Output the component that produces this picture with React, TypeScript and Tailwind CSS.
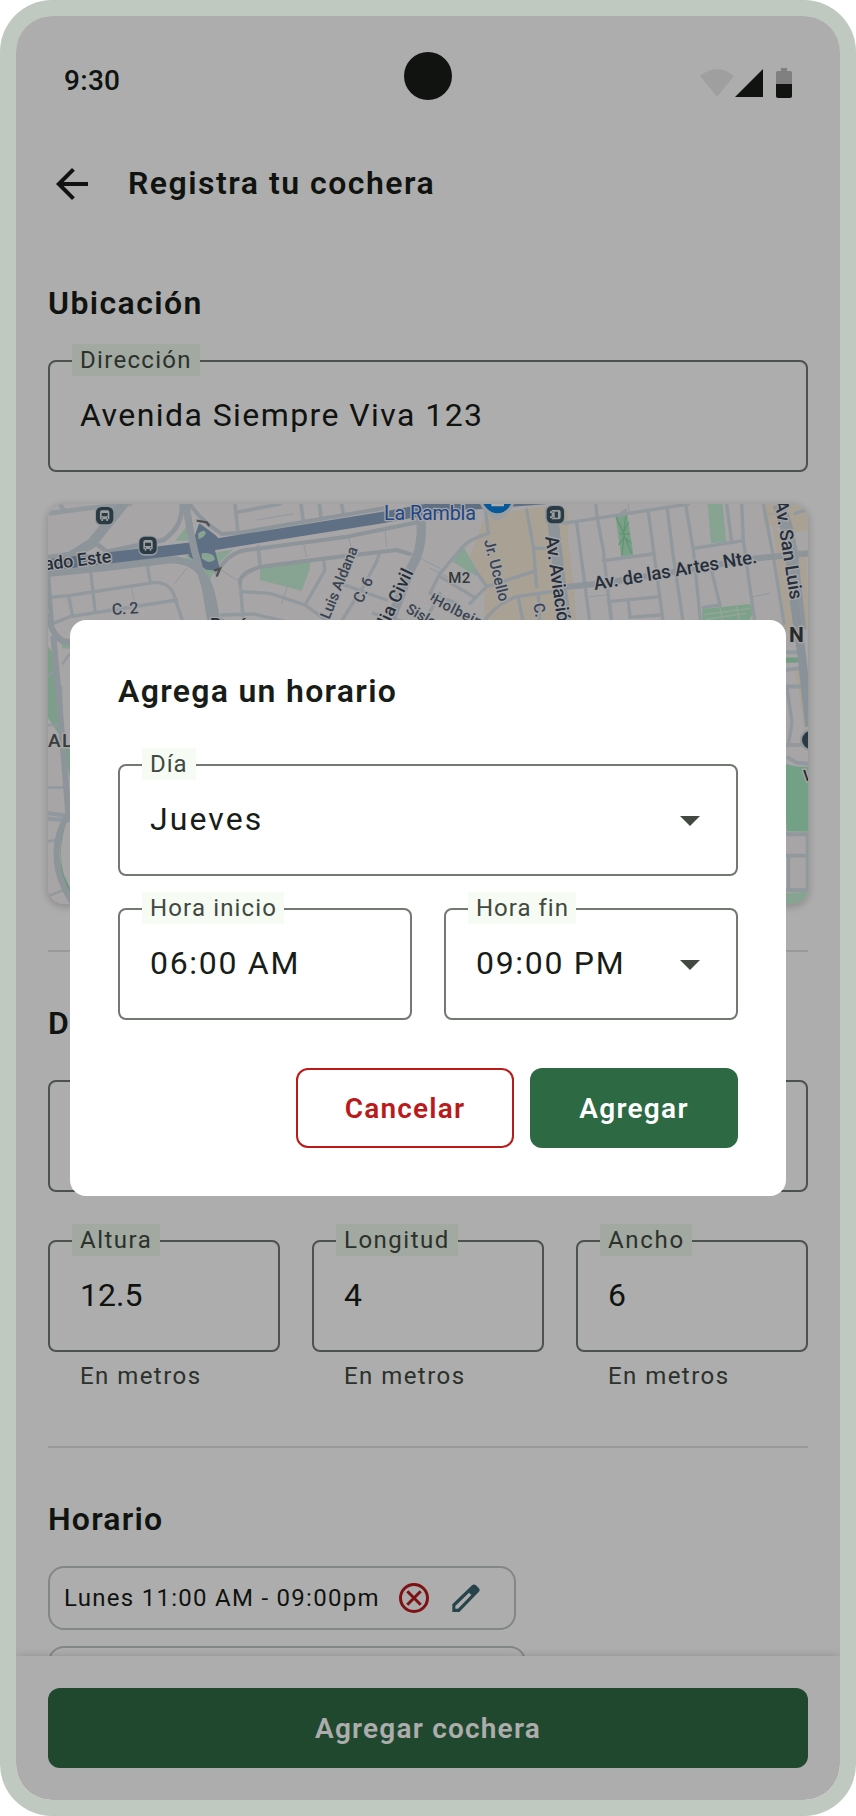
import React from "react";

type FieldProps = {
  label?: string;
  value?: string;
  labelClass?: string;
  valueClass?: string;
  className?: string;
  tint?: string;
  caret?: boolean;
};

function Field({ label, value, labelClass = "", valueClass = "", className = "", tint = "bg-[#eefaed]", caret = false }: FieldProps) {
  return (
    <div className={`relative flex h-28 items-center justify-between rounded-lg border-2 border-[#717971] pr-[30px] pb-0.5 pl-[30px] ${className}`}>
      {label && (
        <span className={`absolute -top-[18px] left-[22px] h-8 px-2 text-[24px] leading-8 whitespace-nowrap text-[#414941] ${tint} ${labelClass}`}>
          {label}
        </span>
      )}
      <span className={`text-[32px] leading-10 whitespace-nowrap text-[#181d18] ${valueClass}`}>{value}</span>
      {caret && (
        <svg className="mt-1 mr-1.5 h-2.5 w-5" viewBox="0 0 20 10">
          <path d="M0 0H20L10 10Z" fill="#414941" />
        </svg>
      )}
    </div>
  );
}

function BusIcon({ x, y, turn = 0 }: { x: number; y: number; turn?: number }) {
  return (
    <g transform={`translate(${x} ${y}) rotate(${turn})`}>
      <rect x="-29" y="-29" width="58" height="60" rx="18" fill="#d5dde4" />
      <rect x="-26" y="-26" width="52" height="52" rx="16" fill="#405764" />
      <path d="M-14 -10q0-6 6-6H8q6 0 6 6V11H10v5H5V11H-5v5H-10V11H-14Z" fill="#e6ebee" />
      <path d="M-9 -8H9V2H-9Z" fill="#405764" />
      <circle cx="-8" cy="7" r="2" fill="#405764" />
      <circle cx="8" cy="7" r="2" fill="#405764" />
    </g>
  );
}

function StreetMap() {
  const west = "translate(-8 -14) scale(.33333)";
  const east = "translate(382 -14) scale(.33333)";
  const edgeW = "translate(-8 96) scale(.33333 .35714)";
  const edgeE = "translate(672 96) scale(.33333 .3827)";
  return (
    <svg className="block h-full w-full" viewBox="0 0 760 400">
      <rect width="760" height="400" fill="#f7f3f4" />

      {/* parks and commercial areas */}
      <g transform={west} stroke="none">
        <path d="M660 228L812 216L808 240L785 302L660 270Z" fill="#c8f0d6" />
        <path d="M405 152L440 110L445 152ZM435 197L520 190L580 178L540 215L510 268Z" fill="#c8f0d6" />
      </g>
      <g transform={east}>
        <path d="M165 75L340 50L415 60V160L432 300L440 420H160L165 290L120 200Z" fill="#faeed9" />
        <path d="M1000 42H1135V120L1090 130L1000 100Z" fill="#faeed9" />
        <path d="M1030 110L1130 200L1134 420H1060Z" fill="#faeed9" />
        <path d="M68 215L100 170L138 235V258Z" fill="#c8f0d6" />
        <path d="M833 42H878L888 155L843 160Z" fill="#c8f0d6" />
        <path d="M556 75L592 72L610 194L574 200Z" fill="#b3eec8" />
        <path d="M816 358L960 342L968 372L940 420H820Z" fill="#b8efcb" />
        <path d="M558 80L580 130L588 76M582 135L605 190M582 135L576 195M570 132H600M568 100L580 130L596 96M566 165L582 140L604 160" stroke="#94d8ac" strokeWidth="4" fill="none" />
        <path d="M822 374L960 355M826 388L950 370M870 355L880 400M920 350L928 395" stroke="#dcf4e4" strokeWidth="4" />
      </g>
      <g transform={edgeW}>
        <path d="M24 130L40 150L46 190L62 345L90 420V500L60 380L24 330Z" fill="#b8ebca" />
        <path d="M66 120H90V136H66Z" fill="#c8f0d6" />
        <path d="M80 620Q50 700 72 770L92 810L92 845Q62 790 62 745Q58 660 72 620Z" fill="#a4e0b9" />
      </g>
      <g transform={edgeE}>
        <path d="M190 425Q225 438 264 436V605L200 604Z" fill="#aaeec4" />
        <path d="M190 765Q230 768 264 760V800H190Z" fill="#c8f0d6" />
        <path d="M190 150H232L238 158L230 164H190Z" fill="#a8e6bd" />
        <path d="M225 180L238 176L262 330L256 350Z" fill="#faeed9" />
      </g>

      {/* minor streets */}
      <g transform={west} fill="none" stroke="#d6e1e9" strokeWidth="10" strokeLinecap="round">
        <path d="M24 70L140 55L270 42M60 40L70 62" strokeWidth="14" />
        <path d="M320 215L330 272M152 243L165 360M86 320L98 380M30 322L90 316L345 277Q385 277 400 310L430 400M40 400L90 380L410 330" />
        <path d="M585 42L594 128M594 66L720 42M783 42L790 95M838 42L843 80M905 42L910 72M655 170L660 228" strokeWidth="11" />
        <path d="M850 208L855 240L795 345M605 305L690 310L795 345L860 392M600 278L610 390M545 375L640 372L740 395" />
        <path d="M1020 185L1010 215L970 290L900 400M900 280L1040 330M1000 370L1110 400M1140 420L1200 310" />
        <path d="M925 140L935 175M1110 190L1200 235M745 280L725 340M660 230L600 270M1035 120L1040 170M790 160L800 200M530 230L590 270L640 235M405 280L440 235M275 290L285 350M650 90L760 72" strokeWidth="3" />
      </g>
      <g transform={east} fill="none" stroke="#d6e1e9" strokeWidth="10" strokeLinecap="round">
        <path d="M165 50L175 130Q110 150 90 180L30 250L0 310M135 240L170 290L120 340M30 260L130 320M0 310L80 340M170 290L310 245" />
        <path d="M290 60L310 170L320 290M310 175H345M160 400Q190 345 260 320L400 300M265 322L280 400M325 310L330 420" />
        <path d="M400 100L500 85L775 42M497 42L502 85L520 180L545 410M440 98L480 400M575 70L588 60M655 65L700 400M712 58L730 200L760 400M768 50L790 180L812 400" />
        <path d="M520 212L668 192M790 175L940 152L935 42M890 42L905 155M940 152L975 400M843 235L870 345L820 352M535 335L690 320M540 345L545 400M595 335L600 382L690 375" />
        <path d="M1000 42L1030 200L1062 400M1095 70L1135 58" />
        <path d="M0 235L60 265M480 320L530 315M970 320L1020 310M595 42L600 70M1010 72H1030" strokeWidth="3" />
      </g>
      <g transform={edgeW} fill="none" stroke="#d6e1e9" strokeWidth="12">
        <path d="M24 213L46 195M24 525H72M24 676L60 670M24 830L70 812M66 180L90 150M24 350H60M64 240V320" strokeWidth="7" />
        <path d="M24 597L90 605M24 612L90 618" />
      </g>
      <g transform={edgeE} fill="none" stroke="#d6e1e9" strokeWidth="10">
        <path d="M190 184L240 178M190 226H242M200 220L216 320L205 380M190 380L264 378M200 410L230 425L264 428M190 612H264M190 668H264M206 670V762M190 758H264M262 615V760M190 137H235" />
      </g>

      {/* avenues */}
      <g transform={west} fill="none" stroke="#d0dbe3" strokeLinecap="round">
        <path d="M250 42L155 160L90 200L24 210" strokeWidth="30" />
        <path d="M155 150L200 185L370 150Q430 110 425 42" strokeWidth="14" />
        <path d="M24 250L200 232L380 210Q460 205 490 260L515 400" strokeWidth="22" />
        <path d="M450 42Q480 90 545 132L600 128L1030 55" strokeWidth="12" />
        <path d="M530 250Q565 180 640 178L920 140L1140 95" strokeWidth="12" />
        <path d="M505 410L540 400" strokeWidth="34" />
        <path d="M600 280Q600 240 680 228L860 205L1070 180L1110 192" strokeWidth="12" />
        <path d="M1140 60Q1155 170 1115 230L1040 420" strokeWidth="28" />
        <path d="M24 260L35 400" strokeWidth="14" />
      </g>
      <g transform={west} fill="none" stroke="#8da6c5">
        <path d="M24 225L220 202L470 172L1030 82L1260 40" strokeWidth="34" />
        <path d="M480 106L525 140L545 165L500 180L465 150ZM450 195L500 235L535 238L520 180Z" strokeWidth="9" fill="#8da6c5" strokeLinejoin="round" />
      </g>
      <g transform={west}>
        <path d="M475 130Q495 115 498 130Q490 145 475 147Z" fill="#c8f0d6" />
        <path d="M485 190Q520 185 525 208Q510 225 485 205Z" fill="#c8f0d6" />
        <path d="M438 42Q455 180 500 300L515 410" stroke="#d0dbe3" strokeWidth="22" fill="none" />
        <path d="M494 260Q520 300 532 410" stroke="#d0dbe3" strokeWidth="20" fill="none" />
        <path d="M470 92L500 97L508 108M522 242L540 236L530 260" stroke="#777" strokeWidth="7" fill="none" />
      </g>
      <g transform={east} fill="none" stroke="#d0dbe3">
        <path d="M370 100L388 260L412 420" strokeWidth="34" />
        <path d="M400 292L520 280L980 205L1135 190" strokeWidth="18" />
        <path d="M1045 42Q1080 120 1090 240L1110 420" strokeWidth="38" />
      </g>
      <path d="M388 0L500 0L380 9Z" fill="#8da6c5" />
      <g transform={edgeW} fill="none" stroke="#d0dbe3">
        <path d="M24 40Q40 120 90 118M40 100L58 290L80 540L85 600Q35 670 55 760Q70 810 100 850" strokeWidth="18" />
      </g>
      <g transform={edgeE} fill="none" stroke="#cbd8e2">
        <path d="M222 0L246 150L268 330" strokeWidth="26" />
      </g>

      {/* place markers */}
      <g transform={west}>
        <BusIcon x={194} y={77} />
        <BusIcon x={324} y={166} />
      </g>
      <g transform={east}>
        <BusIcon x={376} y={74} turn={90} />
        <path d="M150 42Q160 65 190 88Q202 98 214 88Q245 65 252 42Z" fill="#e4e9ee" />
        <path d="M160 42Q178 70 202 70Q228 70 243 42Z" fill="#0a84e0" />
        <path d="M184 42H222V49H184Z" fill="#fff" />
      </g>
      <circle cx="763" cy="236" r="10" fill="#405764" stroke="#d5dde4" strokeWidth="2" />

      {/* street names */}
      <g fill="#384658" stroke="#f3f3f5" strokeWidth="8" strokeLinejoin="round" paintOrder="stroke" fontFamily="Roboto, sans-serif" fontWeight="500">
        <g transform={west}>
          <text transform="translate(14 241) rotate(-7)" fontSize="54" textLength="203">ado Este</text>
          <text transform="translate(217 375) rotate(-4)" fontSize="48" textLength="80" fill="#56647a">C. 2</text>
          <text transform="translate(868 390) rotate(-68)" fontSize="45" textLength="230" fill="#56647a">Luis Aldana</text>
          <text transform="translate(966 342) rotate(-64)" fontSize="46" textLength="80" fill="#56647a">C. 6</text>
          <text transform="translate(1038 424) rotate(-65)" fontSize="54" textLength="196">dia Civil</text>
          <text transform="translate(1095 365) rotate(30)" fontSize="44" fill="#56647a">Sisley</text>
          <text transform="translate(1196 345) rotate(-60)" fontSize="42" fill="#56647a">T</text>
          <text x="510" y="420" fontSize="52" letterSpacing="2">Perú</text>
          <text x="1032" y="89" fontSize="59" fontWeight="400" textLength="276" fill="#2e66c8">La Rambla</text>
        </g>
        <g transform={east}>
          <text x="55" y="279" fontSize="45" textLength="66" fill="#4d5357">M2</text>
          <text transform="translate(162 152) rotate(76)" fontSize="46" textLength="190" fill="#56647a">Jr. Ucello</text>
          <text transform="translate(5 340) rotate(27)" fontSize="44" textLength="160" fill="#56647a">Holbein</text>
          <text transform="translate(346 140) rotate(82)" fontSize="56" textLength="290">Av. Aviación</text>
          <text transform="translate(310 342) rotate(80)" fontSize="46" fill="#56647a">C. 5</text>
          <text transform="translate(494 300) rotate(-9.5)" fontSize="56" textLength="496">Av. de las Artes Nte.</text>
          <text transform="translate(1034 34) rotate(81)" fontSize="56" textLength="300">Av. San Luis</text>
        </g>
        <text x="741" y="138" fontSize="21" fontWeight="700" strokeWidth="3" fill="#3c3f42">N</text>
        <text x="0" y="243" fontSize="19" letterSpacing="1.5" strokeWidth="3" fill="#55585b">AL</text>
        <text x="755" y="277" fontSize="15" strokeWidth="3" fill="#3c3f42">V</text>
      </g>
    </svg>
  );
}

function StatusBar() {
  return (
    <div className="flex h-[128px] items-center justify-between px-12">
      <span className="w-[150px] pt-0.5 text-[28px] leading-8 font-medium tracking-[0.3px] text-[#181d18]">9:30</span>
      <div className="-mt-2 size-12 rounded-full bg-[#181d18]" />
      <svg className="mt-1 h-8 w-[150px]" viewBox="642 66 150 32">
        <path d="M700 76Q717 62 734 76L717 97Z" fill="#000" opacity=".08" />
        <path d="M735 97L763 69V97Z" fill="#181d18" />
        <path d="M781 68H787V71H790Q792 71 792 73V84H776V73Q776 71 778 71H781Z" fill="#181d18" opacity=".29" />
        <path d="M776 84H792V96Q792 98 790 98H778Q776 98 776 96Z" fill="#181d18" />
      </svg>
    </div>
  );
}

function Dialog() {
  return (
    <div className="flex h-[576px] w-[716px] flex-col rounded-2xl bg-white px-12 pt-[51px]">
      <h2 className="text-[32px] leading-10 font-semibold tracking-[1.3px] text-[#181d18]">Agrega un horario</h2>
      <Field className="mt-[53px]" label="Día" value="Jueves" caret tint="bg-[#f6fbf3]" labelClass="w-[54px] tracking-[0.9px]" valueClass="tracking-[2.1px]" />
      <div className="mt-8 grid grid-cols-2 gap-8">
        <Field label="Hora inicio" value="06:00 AM" tint="bg-[#f6fbf3]" labelClass="w-[142px] tracking-[1.15px]" valueClass="tracking-[1.7px]" />
        <Field label="Hora fin" value="09:00 PM" caret tint="bg-[#f6fbf3]" labelClass="w-[108px] tracking-[1px]" valueClass="tracking-[1.7px]" />
      </div>
      <div className="mt-12 flex justify-end gap-4">
        <button className="h-20 w-[218px] rounded-xl border-2 border-[#ba1a1a] pt-0.5 text-[28px] font-semibold tracking-[1.2px] text-[#ba1a1a]">Cancelar</button>
        <button className="h-20 w-[208px] rounded-xl bg-[#2d6a43] pt-0.5 text-[28px] font-semibold tracking-[1.3px] text-white">Agregar</button>
      </div>
    </div>
  );
}

export default function App() {
  return (
    <div className="relative h-[1816px] w-[856px] overflow-hidden bg-white font-['Roboto',sans-serif]">
      <div className="h-full rounded-[52px] bg-[#bfc9bf] p-4">
        <div className="relative flex h-full flex-col overflow-hidden rounded-[36px] bg-white">
          <StatusBar />
          <header className="flex h-20 items-center gap-8 px-8">
            <svg className="size-12" viewBox="0 0 24 24" fill="#181d18">
              <path d="M7.825 13L13.425 18.6L12 20L4 12L12 4L13.425 5.4L7.825 11H20V13Z" />
            </svg>
            <h1 className="-mt-0.5 text-[32px] leading-10 font-semibold tracking-[1.5px] text-[#181d18]">Registra tu cochera</h1>
          </header>

          <main className="flex min-h-0 flex-1 flex-col overflow-hidden px-8 pt-[59px]">
            <h2 className="text-[32px] leading-10 font-semibold tracking-[1.4px] text-[#181d18]">Ubicación</h2>
            <Field className="mt-[37px] shrink-0" label="Dirección" value="Avenida Siempre Viva 123" labelClass="w-[128px] tracking-[1.3px]" valueClass="tracking-[1.43px]" />
            <div className="mt-8 h-[400px] shrink-0 overflow-hidden rounded-2xl shadow-[0_2px_6px_2px_rgba(0,0,0,0.15)]">
              <StreetMap />
            </div>
            <div className="mt-[46px] h-0.5 shrink-0 bg-[#e2e2e2]" />
            <h2 className="mt-[51px] text-[32px] leading-10 font-semibold tracking-[1.3px] text-[#181d18]">Dimensiones</h2>
            <Field className="mt-[37px] shrink-0" />
            <div className="mt-12 grid shrink-0 grid-cols-3 gap-8">
              <div>
                <Field label="Altura" value="12.5" labelClass="w-[88px] tracking-[1.5px]" valueClass="tracking-[0px]" />
                <p className="mt-2 pl-8 text-[24px] leading-8 tracking-[1.45px] text-[#414941]">En metros</p>
              </div>
              <div>
                <Field label="Longitud" value="4" labelClass="w-[122px] tracking-[1.5px]" />
                <p className="mt-2 pl-8 text-[24px] leading-8 tracking-[1.45px] text-[#414941]">En metros</p>
              </div>
              <div>
                <Field label="Ancho" value="6" labelClass="w-[92px] tracking-[1.7px]" />
                <p className="mt-2 pl-8 text-[24px] leading-8 tracking-[1.45px] text-[#414941]">En metros</p>
              </div>
            </div>
            <div className="mt-[54px] h-0.5 shrink-0 bg-[#e2e2e2]" />
            <h2 className="mt-[51px] text-[32px] leading-10 font-semibold tracking-[1.2px] text-[#181d18]">Horario</h2>
            <div className="mt-[27px] flex h-16 w-[468px] shrink-0 items-center rounded-2xl border-2 border-[#bfc9bf] pl-3.5">
              <span className="w-[335px] text-[24px] leading-8 tracking-[1.28px] whitespace-nowrap text-[#181d18]">Lunes 11:00 AM - 09:00pm</span>
              <svg className="size-[30px]" viewBox="0 0 30 30" fill="none" stroke="#ba1a1a" strokeWidth="3">
                <circle cx="15" cy="15" r="13.5" />
                <path d="M8.3 8.3L21.7 21.7M21.7 8.3L8.3 21.7" />
              </svg>
              <svg className="ml-[23px] size-7" viewBox="0 0 84 84" fill="#3a656f">
                <path d="M1 84V61L60 4Q66 -1 72 4L80 12Q86 18 80 24L22 84ZM10 66V74H18L58 33L51 26Z" fillRule="evenodd" />
              </svg>
            </div>
            <div className="mt-4 h-16 w-[478px] shrink-0 rounded-2xl border-2 border-[#bfc9bf]" />
          </main>

          <footer className="relative h-36 shrink-0 bg-white p-8 shadow-[0_0_8px_rgba(0,0,0,0.18)]">
            <button className="h-20 w-full rounded-xl bg-[#2f6a44] pt-0.5 text-[28px] font-semibold tracking-[1.2px] text-white">Agregar cochera</button>
          </footer>

          <div className="absolute inset-0 flex items-start justify-center bg-black/32 pt-[604px]">
            <Dialog />
          </div>
        </div>
      </div>
    </div>
  );
}
